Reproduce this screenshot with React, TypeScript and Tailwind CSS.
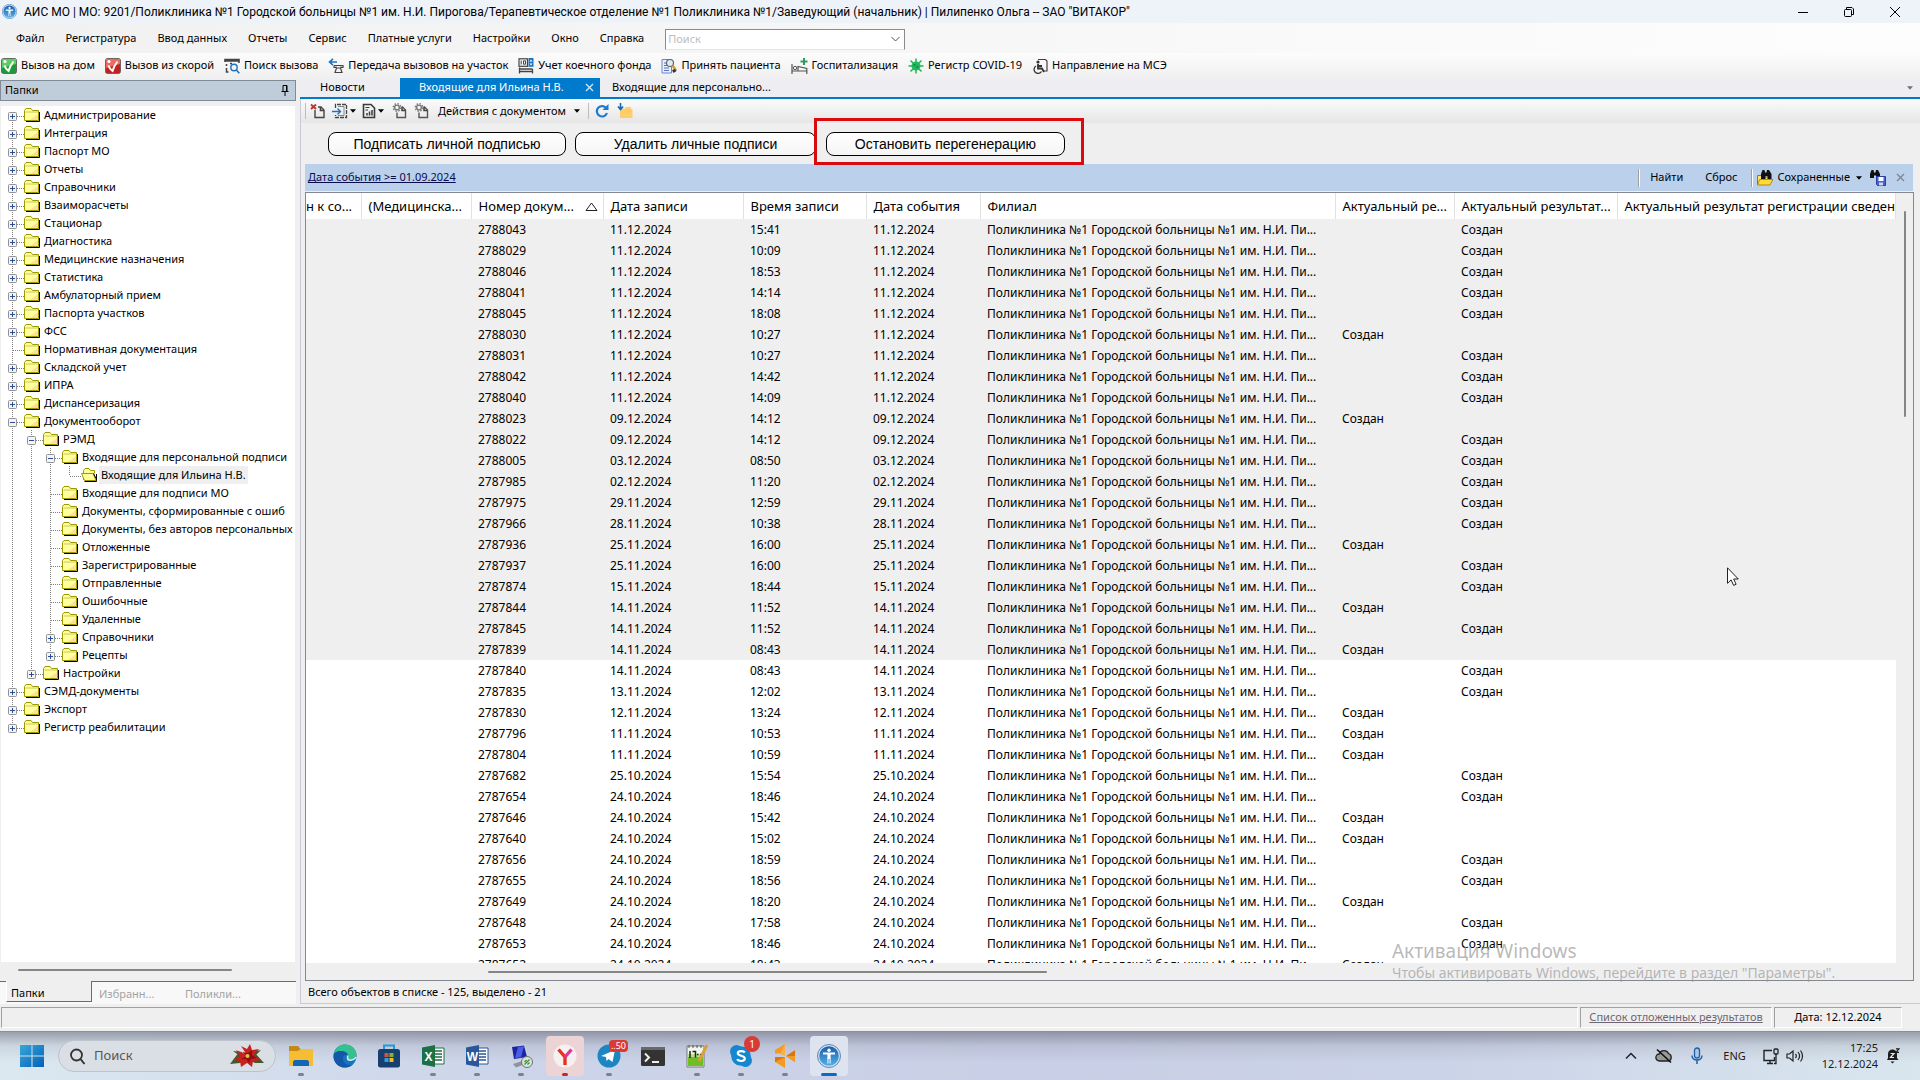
import type { ReactNode } from "react";

/* ---------- small drawings ---------- */

function AppLogo({ size = 16 }: { size?: number }) {
  return (
    <svg width={size} height={size} viewBox="0 0 24 24" aria-hidden="true">
      <defs>
        <linearGradient id="logoFill" x1="0" y1="0" x2="0" y2="1">
          <stop offset="0" stopColor="#1d5ea8" />
          <stop offset="1" stopColor="#4fb0e8" />
        </linearGradient>
      </defs>
      <circle cx="12" cy="12" r="11.5" fill="#cfdfef" stroke="#5b87b5" />
      <circle cx="12" cy="12" r="9.8" fill="url(#logoFill)" />
      <circle cx="12" cy="6.2" r="1.7" fill="#fff" />
      <path d="M6 8.6h12v2h-4.4v9h-1v-4.5h-1.2v4.5h-1v-9H6z" fill="#fff" />
    </svg>
  );
}

function Folder() {
  return (
    <svg width="16" height="16" viewBox="0 0 16 16" className="shrink-0" aria-hidden="true">
      <path d="M2 14.5h13.5V5" fill="none" stroke="#000" />
      <path d="M.5 13.500V3.500l1.500-2h5l1.500 2h6v10z" fill="#ffff9c" stroke="#9c9a00" />
      <path d="M1.500 5h12.500" stroke="#c9c760" />
      <path d="M14 7v6H6z" fill="#ffcf9c" opacity=".7" />
    </svg>
  );
}

function FolderOpen() {
  return (
    <svg width="16" height="16" viewBox="0 0 16 16" className="shrink-0" aria-hidden="true">
      <path d="M3.500 14.500h12V7" fill="none" stroke="#000" />
      <path d="M2.500 13V3.500l1.500-2h4l1.500 2h4v3" fill="#ffff9c" stroke="#9c9a00" />
      <path d="M.5 6.500h11.500l3 7H3.500z" fill="#ffff9c" stroke="#9c9a00" />
      <path d="M12.500 6.500l2.500 5" stroke="#000" />
    </svg>
  );
}

function Caret({ className = "" }: { className?: string }) {
  return (
    <svg width="6" height="4" viewBox="0 0 7 4" className={className} aria-hidden="true">
      <path d="M0 0h7L3.500 4z" fill="currentColor" />
    </svg>
  );
}

function CallIcon({ color, light }: { color: string; light: string }) {
  return (
    <svg width="16" height="16" viewBox="0 0 16 16" aria-hidden="true">
      <rect x=".5" y=".5" width="15" height="15" rx="2" fill={color} stroke="#555" strokeWidth=".8" />
      <path d="M1 1h14v5L1 10z" fill={light} opacity=".7" />
      <path d="M3.500 7.500c1 3 2.500 4.500 4 5.500 1-3.500 3-7 5-9.500" fill="none" stroke="#fff" strokeWidth="2" />
      <circle cx="4" cy="3.500" r="1.600" fill="#fff" />
    </svg>
  );
}

function SearchCallIcon() {
  return (
    <svg width="16" height="16" viewBox="0 0 16 16" fill="none" aria-hidden="true">
      <path d="M1 4V1.500h14V5M1 3h14" stroke="#444" strokeWidth="1.600" />
      <path d="M2.500 6v2M2.500 10v4h2M6 5.500h2" stroke="#444" strokeWidth="1.500" />
      <circle cx="10" cy="9.500" r="3.200" stroke="#1e73be" strokeWidth="1.400" />
      <path d="M12.300 12l3 3.300" stroke="#1e73be" strokeWidth="1.600" />
    </svg>
  );
}

function TransferIcon() {
  return (
    <svg width="16" height="16" viewBox="0 0 16 16" fill="none" aria-hidden="true">
      <path d="M9 4H2M5 .8L1.500 4 5 7.200" stroke="#1e73be" strokeWidth="1.600" />
      <path d="M6 7.500h9v2h-2v-1M8 10v-1.500M6 7.500v2h2" stroke="#444" strokeWidth="1.200" />
      <path d="M8.500 10h4l1.500 4.500H7z" stroke="#444" strokeWidth="1.200" />
    </svg>
  );
}

function BedCountIcon() {
  return (
    <svg width="16" height="16" viewBox="0 0 16 16" fill="none" aria-hidden="true">
      <rect x="1" y=".8" width="8.500" height="7.500" stroke="#444" strokeWidth="1.200" />
      <path d="M3.200 2.500v4M5.500 2.800h2v3.400h-2z" stroke="#444" />
      <rect x="10.500" y="0" width="5" height="8.800" fill="#1e73be" />
      <path d="M11.500 3.500L13 1.500l1.500 2zM11.500 5.500L13 7.500l1.500-2z" fill="#fff" />
      <path d="M1.500 9.500v6M14.500 11v4.500M1.500 13.500h13M1.500 11h13" stroke="#444" strokeWidth="1.300" />
    </svg>
  );
}

function AcceptIcon() {
  return (
    <svg width="16" height="16" viewBox="0 0 16 16" aria-hidden="true">
      <path d="M1 1.500h9.500v13.500H1z" fill="#e8efff" stroke="#6a86c8" />
      <path d="M3 5h3M3 7.500h4M3 10h5M3 12.500h5" stroke="#5673c0" />
      <circle cx="9" cy="5" r="3.500" fill="#dceaf2" stroke="#666" strokeWidth="1.200" />
      <path d="M11.500 7.500l3.500 5" stroke="#d49a3a" strokeWidth="2.400" />
      <path d="M11 12l3-1 1.500 2-3 2z" fill="#333" />
    </svg>
  );
}

function HospitalIcon() {
  return (
    <svg width="17" height="16" viewBox="0 0 17 16" fill="none" aria-hidden="true">
      <path d="M1 6v10M1 13h15M15.800 16V10.500L7 8.500v4.500" stroke="#555" strokeWidth="1.200" />
      <circle cx="4" cy="10" r="1.700" stroke="#555" />
      <path d="M13 0v7M9.500 3.500h7" stroke="#2e9960" strokeWidth="2" />
    </svg>
  );
}

function VirusIcon() {
  return (
    <svg width="16" height="16" viewBox="0 0 16 16" aria-hidden="true">
      <circle cx="8" cy="8" r="4.500" fill="#22c55e" />
      <path d="M8 .5v15M.5 8h15M2.500 2.500l11 11M13.500 2.500l-11 11" stroke="#22b35e" strokeWidth="1.500" />
      <circle cx="6.500" cy="7" r="1" fill="#0c8a3e" />
      <circle cx="9.500" cy="9.200" r="1" fill="#0c8a3e" />
    </svg>
  );
}

function ReferralIcon() {
  return (
    <svg width="16" height="16" viewBox="0 0 16 16" fill="none" aria-hidden="true">
      <path d="M6 1.500h7.500l1.500 1.500v10h-4" stroke="#444" strokeWidth="1.200" />
      <circle cx="6" cy="4" r="1.600" fill="#333" />
      <path d="M6 6v4.500h4l2 3.500M6 8h4" stroke="#333" strokeWidth="1.800" />
      <path d="M4 8a4 4 0 1 0 5.500 5.500" stroke="#333" strokeWidth="1.300" />
    </svg>
  );
}

function DeleteDocIcon() {
  return (
    <svg width="16" height="16" viewBox="0 0 16 16" fill="none" aria-hidden="true">
      <path d="M5 7v7.500h9V7l-3-3H8" stroke="#444" strokeWidth="1.400" />
      <path d="M10.500 4v3.500H14" stroke="#444" strokeWidth="1.600" />
      <path d="M1 1.500l5 4.500M6 1.500L1 6" stroke="#b8352a" strokeWidth="1.800" />
    </svg>
  );
}

function InsertDocIcon() {
  return (
    <svg width="16" height="16" viewBox="0 0 16 16" fill="none" aria-hidden="true">
      <path d="M3.500 5V1.500h11v13h-11V12" stroke="#444" strokeWidth="1.300" strokeDasharray="4 1" />
      <path d="M6 3.500h6v9H6" stroke="#888" />
      <path d="M0 8.500h8M5.500 5.500l3 3-3 3" stroke="#1e73be" strokeWidth="1.400" />
    </svg>
  );
}

function ReportIcon() {
  return (
    <svg width="14" height="16" viewBox="0 0 14 16" fill="none" aria-hidden="true">
      <path d="M1.500 1.500h7.500l3.500 3.500v9.500h-11z" stroke="#3a3a3a" strokeWidth="1.600" />
      <path d="M3.500 4.500h4M3.500 7h2.500" stroke="#3a3a3a" strokeWidth="1.200" />
      <path d="M5 12.500V10M7.500 12.500V8.500M10 12.500V7" stroke="#3a3a3a" strokeWidth="1.500" />
    </svg>
  );
}

function GearDocIcon() {
  return (
    <svg width="16" height="16" viewBox="0 0 16 16" fill="none" aria-hidden="true">
      <path d="M5 9.500v5h8.500V7l-3-3H9.500" stroke="#555" strokeWidth="1.400" />
      <path d="M10 4v3.500h3.500" stroke="#444" strokeWidth="1.600" />
      <circle cx="5" cy="4.500" r="2.400" stroke="#777" strokeWidth="1.400" />
      <circle cx="5" cy="4.500" r="3.800" stroke="#777" strokeWidth="1.300" strokeDasharray="1.500 1.480" />
    </svg>
  );
}

function RefreshIcon() {
  return (
    <svg width="14" height="14" viewBox="0 0 14 14" fill="none" aria-hidden="true">
      <path d="M11.500 4.500A5.200 5.200 0 1 0 12 9" stroke="#1c7ad0" strokeWidth="2.200" />
      <path d="M13.500 0v6H7.500z" fill="#1c7ad0" />
    </svg>
  );
}

function FolderDownIcon() {
  return (
    <svg width="16" height="16" viewBox="0 0 16 16" aria-hidden="true">
      <path d="M3 5.500h5l1-1.500h5v2h1.500v9H3z" fill="#ffce6b" />
      <path d="M3.500 0v6M1 3.500l2.500 3 2.500-3" fill="none" stroke="#1668b0" strokeWidth="1.600" />
    </svg>
  );
}

function Binoculars({ withDisk }: { withDisk?: boolean }) {
  return (
    <svg width="16" height="16" viewBox="0 0 16 16" aria-hidden="true">
      {withDisk ? (
        <>
          <path d="M0 8V4l1.500-4h2L4 2.500h1.500L6 0h2l2 4v4H6V5.500H4V8z" fill="#111" />
          <path d="M6.500 6.500h9v9H7.500l-1-1z" fill="#4a5fd0" stroke="#2c3da0" />
          <path d="M8.500 7h5v4h-5z" fill="#fff" />
          <path d="M9 12.500h4v3H9z" fill="#cdd3f5" />
        </>
      ) : (
        <>
          <path d="M.5 14V5.500h5l1 1.500h6v7z" fill="#ffe36b" stroke="#9a7d00" />
          <path d="M4 9V4l1.500-4h2L8 2.500h1.500L10 0h2l2.500 4v5h-4V6h-2v3z" fill="#111" />
          <path d="M2.500 9.500H16L13 15H.5z" fill="#ffd83b" stroke="#9a7d00" strokeWidth=".8" />
        </>
      )}
    </svg>
  );
}

/* ---------- data ---------- */

type Node = { label: string; guides: number; box?: "+" | "-"; first?: boolean; last?: boolean; active?: boolean };

const tree: Node[] = [
  { label: "Администрирование", guides: 0, box: "+", first: true },
  { label: "Интеграция", guides: 0, box: "+" },
  { label: "Паспорт МО", guides: 0, box: "+" },
  { label: "Отчеты", guides: 0, box: "+" },
  { label: "Справочники", guides: 0, box: "+" },
  { label: "Взаиморасчеты", guides: 0, box: "+" },
  { label: "Стационар", guides: 0, box: "+" },
  { label: "Диагностика", guides: 0, box: "+" },
  { label: "Медицинские назначения", guides: 0, box: "+" },
  { label: "Статистика", guides: 0, box: "+" },
  { label: "Амбулаторный прием", guides: 0, box: "+" },
  { label: "Паспорта участков", guides: 0, box: "+" },
  { label: "ФСС", guides: 0, box: "+" },
  { label: "Нормативная документация", guides: 0 },
  { label: "Складской учет", guides: 0, box: "+" },
  { label: "ИПРА", guides: 0, box: "+" },
  { label: "Диспансеризация", guides: 0, box: "+" },
  { label: "Документооборот", guides: 0, box: "-" },
  { label: "РЭМД", guides: 1, box: "-" },
  { label: "Входящие для персональной подписи", guides: 2, box: "-" },
  { label: "Входящие для Ильина Н.В.", guides: 3, last: true, active: true },
  { label: "Входящие для подписи МО", guides: 2 },
  { label: "Документы, сформированные с ошиб", guides: 2 },
  { label: "Документы, без авторов персональных", guides: 2 },
  { label: "Отложенные", guides: 2 },
  { label: "Зарегистрированные", guides: 2 },
  { label: "Отправленные", guides: 2 },
  { label: "Ошибочные", guides: 2 },
  { label: "Удаленные", guides: 2 },
  { label: "Справочники", guides: 2, box: "+" },
  { label: "Рецепты", guides: 2, box: "+", last: true },
  { label: "Настройки", guides: 1, box: "+", last: true },
  { label: "СЭМД-документы", guides: 0, box: "+" },
  { label: "Экспорт", guides: 0, box: "+" },
  { label: "Регистр реабилитации", guides: 0, box: "+", last: true },
];

/* number, date, time, index of the result column that reads "Создан" */
const rows: [string, string, string, 1 | 2][] = [
  ["2788043", "11.12.2024", "15:41", 2],
  ["2788029", "11.12.2024", "10:09", 2],
  ["2788046", "11.12.2024", "18:53", 2],
  ["2788041", "11.12.2024", "14:14", 2],
  ["2788045", "11.12.2024", "18:08", 2],
  ["2788030", "11.12.2024", "10:27", 1],
  ["2788031", "11.12.2024", "10:27", 2],
  ["2788042", "11.12.2024", "14:42", 2],
  ["2788040", "11.12.2024", "14:09", 2],
  ["2788023", "09.12.2024", "14:12", 1],
  ["2788022", "09.12.2024", "14:12", 2],
  ["2788005", "03.12.2024", "08:50", 2],
  ["2787985", "02.12.2024", "11:20", 2],
  ["2787975", "29.11.2024", "12:59", 2],
  ["2787966", "28.11.2024", "10:38", 2],
  ["2787936", "25.11.2024", "16:00", 1],
  ["2787937", "25.11.2024", "16:00", 2],
  ["2787874", "15.11.2024", "18:44", 2],
  ["2787844", "14.11.2024", "11:52", 1],
  ["2787845", "14.11.2024", "11:52", 2],
  ["2787839", "14.11.2024", "08:43", 1],
  ["2787840", "14.11.2024", "08:43", 2],
  ["2787835", "13.11.2024", "12:02", 2],
  ["2787830", "12.11.2024", "13:24", 1],
  ["2787796", "11.11.2024", "10:53", 1],
  ["2787804", "11.11.2024", "10:59", 1],
  ["2787682", "25.10.2024", "15:54", 2],
  ["2787654", "24.10.2024", "18:46", 2],
  ["2787646", "24.10.2024", "15:42", 1],
  ["2787640", "24.10.2024", "15:02", 1],
  ["2787656", "24.10.2024", "18:59", 2],
  ["2787655", "24.10.2024", "18:56", 2],
  ["2787649", "24.10.2024", "18:20", 1],
  ["2787648", "24.10.2024", "17:58", 2],
  ["2787653", "24.10.2024", "18:46", 2],
  ["2787652", "24.10.2024", "18:43", 1],
];
const SELECTED = 21;

const menu = ["Файл", "Регистратура", "Ввод данных", "Отчеты", "Сервис", "Платные услуги", "Настройки", "Окно", "Справка"];

const tools: [string, ReactNode][] = [
  ["Вызов на дом", <CallIcon color="#1e9a3a" light="#7be07b" />],
  ["Вызов из скорой", <CallIcon color="#c22020" light="#ff8a80" />],
  ["Поиск вызова", <SearchCallIcon />],
  ["Передача вызовов на участок", <TransferIcon />],
  ["Учет коечного фонда", <BedCountIcon />],
  ["Принять пациента", <AcceptIcon />],
  ["Госпитализация", <HospitalIcon />],
  ["Регистр COVID-19", <VirusIcon />],
  ["Направление на МСЭ", <ReferralIcon />],
];

/* ---------- parts ---------- */

function TreeRow({ node }: { node: Node }) {
  return (
    <li className="flex h-[18px] items-center whitespace-nowrap">
      {Array.from({ length: node.guides }, (_, i) => (
        <svg key={i} width="19" height="18" className="shrink-0" aria-hidden="true">
          <path d="M9.500 0v18" stroke="#808080" strokeDasharray="1 1" />
        </svg>
      ))}
      <svg width="21" height="18" className="shrink-0" aria-hidden="true">
        {!node.first && <path d="M9.500 0v10" stroke="#808080" strokeDasharray="1 1" />}
        {!node.last && <path d="M9.500 10v8" stroke="#808080" strokeDasharray="1 1" />}
        <path d="M10 10.500h11" stroke="#808080" strokeDasharray="1 1" />
        {node.box && (
          <>
            <rect x="5.500" y="6.500" width="8" height="8" rx="1" fill="#f4f4f4" stroke="#919191" />
            <path d={node.box === "+" ? "M7 10.500h5M9.500 8v5" : "M7 10.500h5"} stroke="#2b4b9b" />
          </>
        )}
      </svg>
      {node.active ? <FolderOpen /> : <Folder />}
      <span className={node.active ? "ml-0.5 bg-[#efefef] px-0.5" : "ml-1"}>{node.label}</span>
    </li>
  );
}

function SidePanel() {
  return (
    <aside className="flex w-[296px] shrink-0 flex-col pt-0.5 text-[11px]">
      <div className="flex h-[21px] items-center justify-between border border-[#7f8b97] bg-[#bfcddb] pr-1.5 pl-1">
        <h2>Папки</h2>
        <button aria-label="Закрепить панель">
          <svg width="8" height="11" viewBox="0 0 8 11" fill="none" aria-hidden="true">
            <path d="M2 6V.5h4V6M.5 6.500h7M4 7v4" stroke="#000" />
            <path d="M5.500 1v5" stroke="#000" />
          </svg>
        </button>
      </div>
      <ul className="mt-[5px] mr-px ml-px min-h-0 flex-1 overflow-hidden bg-white pl-[2px] leading-[18px]">
        {tree.map((n, i) => (
          <TreeRow key={i} node={n} />
        ))}
      </ul>
      <div className="flex h-[19px] items-center pb-[3px] pl-[18px]">
        <div className="h-0.5 w-[214px] rounded bg-[#858585]" />
      </div>
      <div role="tablist" className="flex h-[23px] border-t border-[#6b6b6b] bg-[#f8f8f8] leading-6">
        <button role="tab" aria-selected="true" className="-mt-px mb-0.5 ml-1.5 w-[86px] border-r border-b border-l border-[#6b6b6b] border-l-white bg-[#efefef] pl-1 text-left">
          Папки
        </button>
        <button role="tab" aria-selected="false" className="w-[86px] pl-[7px] text-left text-[#a3a3a3]">Избранн...</button>
        <button role="tab" aria-selected="false" className="w-[86px] pl-[7px] text-left text-[#a3a3a3]">Поликли...</button>
      </div>
    </aside>
  );
}

function Divider({ className = "" }: { className?: string }) {
  return <span className={"h-4 w-px bg-[#bdbdbd] " + className} />;
}

function DocumentToolbar() {
  return (
    <div className="flex h-6 items-center bg-linear-to-b from-[#fbfbfb] to-[#e6e6e6] pl-1 text-[11px]">
      <Divider />
      <button aria-label="Удалить документ" className="ml-1"><DeleteDocIcon /></button>
      <button aria-label="Вставить" className="ml-1.5 flex items-center gap-0.5"><InsertDocIcon /><Caret /></button>
      <button aria-label="Отчет" className="ml-1.5 flex items-center gap-0.5"><ReportIcon /><Caret /></button>
      <button aria-label="Обработать" className="ml-2"><GearDocIcon /></button>
      <button aria-label="Обработать все" className="ml-1.5"><GearDocIcon /></button>
      <button className="ml-2 flex items-center gap-2">Действия с документом<Caret /></button>
      <Divider className="ml-2" />
      <button aria-label="Обновить" className="ml-1.5"><RefreshIcon /></button>
      <button aria-label="Загрузить" className="ml-2"><FolderDownIcon /></button>
    </div>
  );
}

function ActionButtons() {
  const shape = "h-6 rounded-lg border border-black bg-linear-to-b from-white to-[#f5f5f5] font-['Liberation_Sans',sans-serif] text-sm";
  return (
    <div className="relative flex h-[41px] items-center pl-[27px]">
      <button className={shape + " w-[238px]"}>Подписать личной подписью</button>
      <button className={shape + " ml-[9px] w-[241px]"}>Удалить личные подписи</button>
      <button className={shape + " ml-[10px] w-[239px]"}>Остановить перегенерацию</button>
      <div className="pointer-events-none absolute -top-[5px] left-[513px] z-10 h-[47px] w-[270px] border-3 border-[#d90b0f]" />
    </div>
  );
}

function FilterBar() {
  return (
    <div className="mr-[7px] ml-1 flex h-[27px] items-center bg-[#bad0eb] pl-[3px] text-[11px]">
      <a href="#filter" className="text-[#0b0b4f] underline">Дата события &gt;= 01.09.2024</a>
      <div className="ml-auto flex items-center">
        <span className="h-[18px] w-0.5 border-l border-[#a0a0a0] bg-white" />
        <button className="ml-2.5">Найти</button>
        <button className="ml-[22px]">Сброс</button>
        <span className="ml-3.5 h-[18px] w-0.5 border-l border-[#a0a0a0] bg-white" />
        <button className="ml-1 flex items-center gap-1"><Binoculars />Сохраненные<Caret className="ml-0.5" /></button>
        <button aria-label="Сохранить фильтр" className="ml-2"><Binoculars withDisk /></button>
        <button aria-label="Закрыть фильтр" className="mr-2 ml-2.5">
          <svg width="9" height="9" viewBox="0 0 9 9" aria-hidden="true"><path d="M1 1l7 7M8 1L1 8" stroke="#7b8794" strokeWidth="1.400" /></svg>
        </button>
      </div>
    </div>
  );
}

function Th({ children, clip }: { children: ReactNode; clip?: boolean }) {
  return (
    <th className={"h-[26px] overflow-hidden border-r border-[#e2e2e2] text-left text-[13px] font-normal whitespace-nowrap " + (clip ? "pl-0" : "pl-[7px]")}>
      {children}
    </th>
  );
}

function DocumentTable() {
  return (
    <div className="mt-px mr-[6px] ml-1 flex min-h-0 flex-1 flex-col border border-[#828790] bg-[#efefef]">
      <div className="flex min-h-0 flex-1">
        <div className="min-w-0 flex-1 overflow-hidden bg-white">
          <table className="w-full table-fixed border-collapse text-[12px] leading-[18px]">
            <colgroup>
              <col className="w-[55px]" />
              <col className="w-[110px]" />
              <col className="w-[132px]" />
              <col className="w-[140px]" />
              <col className="w-[123px]" />
              <col className="w-[114px]" />
              <col className="w-[355px]" />
              <col className="w-[119px]" />
              <col className="w-[163px]" />
              <col />
            </colgroup>
            <thead>
              <tr className="bg-white">
                <Th clip>н к со...</Th>
                <Th>(Медицинска...</Th>
                <Th>
                  <span className="flex items-center justify-between pr-[5px]">
                    Номер докум...
                    <svg width="13" height="9" viewBox="0 0 13 9" fill="none" aria-hidden="true"><path d="M1 8.500h11L6.500 1z" stroke="#222" /></svg>
                  </span>
                </Th>
                <Th>Дата записи</Th>
                <Th>Время записи</Th>
                <Th>Дата события</Th>
                <Th>Филиал</Th>
                <Th>Актуальный ре...</Th>
                <Th>Актуальный результат...</Th>
                <Th>Актуальный результат регистрации сведен</Th>
              </tr>
            </thead>
            <tbody>
              {rows.map(([num, date, time, col], i) => (
                <tr key={num} className={i < SELECTED ? "h-[21px] bg-[#efefef]" : "h-[21px]"}>
                  <td />
                  <td />
                  <td className="pl-[7px]">{num}</td>
                  <td className="pl-[7px]">{date}</td>
                  <td className="pl-[7px]">{time}</td>
                  <td className="pl-[7px]">{date}</td>
                  <td className="overflow-hidden pl-[7px] whitespace-nowrap">Поликлиника №1 Городской больницы №1 им. Н.И. Пи...</td>
                  <td className="pl-[7px]">{col === 1 ? "Создан" : ""}</td>
                  <td className="pl-[7px]">{col === 2 ? "Создан" : ""}</td>
                  <td />
                </tr>
              ))}
            </tbody>
          </table>
        </div>
        <div className="flex w-[17px] justify-center pt-[18px]">
          <div className="h-[206px] w-0.5 rounded bg-[#858585]" />
        </div>
      </div>
      <div className="flex h-[17px] items-center pl-[182px]">
        <div className="h-0.5 w-[559px] rounded bg-[#858585]" />
      </div>
    </div>
  );
}

/* ---------- taskbar ---------- */

function Task({ label, children, dot }: { label: string; children: ReactNode; dot?: "gray" | "red" | "blue" }) {
  const frame = dot === "red" ? " rounded bg-[#ecd3d6]" : dot === "blue" ? " rounded bg-[#dde3ef]" : "";
  const mark = dot === "blue" ? "w-4 bg-[#0b6cc4]" : dot === "red" ? "w-1.5 bg-[#c22a2a]" : dot ? "w-1.5 bg-[#7c828c]" : "w-0";
  return (
    <button aria-label={label} className="flex w-11 items-center justify-center">
      <span className={"relative flex h-10 w-[38px] items-center justify-center" + frame}>
        {children}
        <span className={"absolute bottom-0 h-[3px] rounded-full " + mark} />
      </span>
    </button>
  );
}

function Office({ letter, color }: { letter: string; color: string }) {
  return (
    <svg width="24" height="24" viewBox="0 0 24 24" aria-hidden="true">
      <path d="M12 4h11v16H12z" fill="#fff" stroke={color} />
      <path d="M14 7h7M14 10h7M14 13h7M14 16h7" stroke={color} strokeWidth="1.500" />
      <path d="M1 3.500L14 1v22L1 20.500z" fill={color} />
      <text x="7.500" y="16.500" textAnchor="middle" fontSize="12" fontWeight="bold" fill="#fff" fontFamily="Liberation Sans">{letter}</text>
    </svg>
  );
}

function Taskbar() {
  return (
    <footer className="flex h-12 shrink-0 bg-[linear-gradient(to_bottom,rgba(90,90,105,0.5),rgba(90,90,105,0.12)_14px,transparent_30px),linear-gradient(to_right,#dbe8f0,#cdd5ea_25%,#c8cfe6_55%,#cbd3e8_75%,#d9e6ee)] pl-[10px] text-[#1c1c1c]">
      <Task label="Пуск">
        <svg width="24" height="24" viewBox="0 0 24 24" aria-hidden="true">
          <defs><linearGradient id="win" x1="0" y1="0" x2="1" y2="1"><stop offset="0" stopColor="#37a7d8" /><stop offset="1" stopColor="#0560b8" /></linearGradient></defs>
          <path d="M0 1h11.500v10.500H0zM12.500 1H24v10.500H12.500zM0 12.500h11.500V23H0zM12.500 12.500H24V23H12.500z" fill="url(#win)" />
        </svg>
      </Task>
      <label className="mt-2 mr-[3px] ml-1 flex h-8 w-[218px] items-center rounded-full border border-[#bcc3cc] bg-[#dadfe5] pr-2.5 pl-2.5">
        <svg width="17" height="17" viewBox="0 0 17 17" fill="none" aria-hidden="true">
          <circle cx="7.500" cy="7" r="5.500" stroke="#333" strokeWidth="1.800" />
          <path d="M11.500 11l4 5" stroke="#333" strokeWidth="2" />
        </svg>
        <input aria-label="Поиск в Windows" placeholder="Поиск" className="ml-2 w-24 bg-transparent text-[13px] outline-none placeholder:text-[#555]" />
        <svg width="36" height="24" viewBox="0 0 36 24" className="ml-auto" aria-hidden="true">
          <path d="M1 20L10 8l6 8-5 3zM35 19L26 9l-6 7 6 3zM4 7l9 1-2 4zM32 6l-9 2 3 4z" fill="#3f5b2a" />
          <path d="M18 11L12 2l6 3 3-5 2 6 7-1-5 6 7 5-8 1-1 6-5-4-6 4-1-6-7-1 7-4-4-6z" fill="#c9201f" />
          <path d="M18 12l-5-4 6 1 4-3 0 5 5 3-6 1-2 4-3-4-5 0z" fill="#8d1010" />
          <circle cx="18.500" cy="12" r="2" fill="#e4c33c" />
        </svg>
      </label>
      <Task label="Проводник" dot="gray">
        <svg width="24" height="24" viewBox="0 0 24 24" aria-hidden="true">
          <path d="M0 2h9l2.500 3H24v17H0z" fill="#c58a16" />
          <path d="M0 7h9l2.500-2H24v17H0z" fill="#f4bd34" />
          <path d="M4 22v-4c0-1 1-2 2-2h12c1 0 2 1 2 2v4z" fill="#1566b4" />
        </svg>
      </Task>
      <Task label="Edge">
        <svg width="24" height="24" viewBox="0 0 24 24" aria-hidden="true">
          <circle cx="12" cy="12" r="11.500" fill="#1474c4" />
          <path d="M1 9C3 3 7 .5 12 .5c7 0 11.500 5 11.500 10 0 4-4 6-7 5.500-3-.6-1-2.500-1.500-5C14.500 8 10 6.500 6 7.200 3.500 7.700 2 8.500 1 9z" fill="#35c18d" />
          <path d="M.5 12C1 8 5 6.500 8.500 7c4 .6 6 2.500 6.400 5-2-1.800-4.500-1-5 1.500-.6 4 3.500 8.500 9 7.500-2 1.800-5 2.500-7 2.500C5 23.500.2 18 .5 12z" fill="#1257a8" />
          <path d="M14.500 11.500c.5 2-1 4 1.500 4.500 2.500.5 6-.5 7-3" fill="none" stroke="#dfe9f4" strokeWidth="1.500" />
        </svg>
      </Task>
      <Task label="Microsoft Store">
        <svg width="24" height="24" viewBox="0 0 24 24" aria-hidden="true">
          <path d="M7 6V1.500h10V6" fill="none" stroke="#1f9bd8" strokeWidth="2" />
          <rect x="1" y="5" width="22" height="18.500" rx="2.500" fill="#173f70" />
          <path d="M7.500 9h4v4h-4z" fill="#e0502e" /><path d="M12.500 9h4v4h-4z" fill="#7fb82c" />
          <path d="M7.500 14h4v4h-4z" fill="#29a3e0" /><path d="M12.500 14h4v4h-4z" fill="#f5b921" />
        </svg>
      </Task>
      <Task label="Excel" dot="gray"><Office letter="X" color="#1d7044" /></Task>
      <Task label="Word" dot="gray"><Office letter="W" color="#2a579a" /></Task>
      <Task label="Удаленный рабочий стол" dot="gray">
        <svg width="24" height="24" viewBox="0 0 24 24" aria-hidden="true">
          <path d="M1 2l15-2 4 14-16 3z" fill="#c9ccd4" /><path d="M3 3l12-1.500L18 13 5 15z" fill="#1724a8" />
          <path d="M9 3l6-.8-3 11-6 .8z" fill="#4b5de0" /><path d="M4 20l9-3 3 3-9 3.500z" fill="#8f949c" />
          <circle cx="18" cy="18" r="5.500" fill="#dfe3df" stroke="#6d736d" /><path d="M15.500 18l2-2M15.500 20.500l5-5M18.500 20.500l2-2" stroke="#2f9a3c" strokeWidth="1.300" />
        </svg>
      </Task>
      <Task label="Яндекс" dot="red">
        <svg width="24" height="24" viewBox="0 0 24 24" aria-hidden="true">
          <circle cx="12" cy="12" r="11.500" fill="#f6f0f0" />
          <path d="M5.500 5.500L12 13v8" fill="none" stroke="#e8321f" strokeWidth="3.400" /><path d="M18.500 5.500L12 13" stroke="#d839a0" strokeWidth="3.400" />
        </svg>
      </Task>
      <Task label="Telegram" dot="gray">
        <svg width="24" height="24" viewBox="0 0 24 24" aria-hidden="true">
          <circle cx="12" cy="12" r="11.500" fill="#1c86c0" />
          <path d="M4 12l14-6-2.500 12-4-3-2 2-.5-4z" fill="#fff" />
        </svg>
        <span className="absolute top-1 right-0 rounded bg-[#d93a35] px-0.5 text-[9px] leading-3 text-white">..50</span>
      </Task>
      <Task label="Терминал">
        <svg width="24" height="24" viewBox="0 0 24 24" aria-hidden="true">
          <rect y="3" width="24" height="19" rx="1.500" fill="#333" /><path d="M0 3h24v3H0z" fill="#686868" />
          <path d="M4 9.500l4 4-4 4M11 18h7" fill="none" stroke="#eee" strokeWidth="2" />
        </svg>
      </Task>
      <Task label="Notepad++" dot="gray">
        <svg width="24" height="24" viewBox="0 0 24 24" aria-hidden="true">
          <path d="M2 2h17v21H2z" fill="#f1f5ea" stroke="#777" /><path d="M3 13h15v9H3z" fill="#6fbf24" /><path d="M3 10h15v3H3z" fill="#b9e08a" />
          <path d="M5 7v7M7.500 7.500h3v6M12 10.500h1.500M15 10.500h1.500" stroke="#222" strokeWidth="1.500" fill="none" /><path d="M22 1L14 17" stroke="#d9a13b" strokeWidth="3" />
          <path d="M4 1v3M8 1v3M12 1v3M16 1v3" stroke="#555" />
        </svg>
      </Task>
      <Task label="Skype" dot="gray">
        <svg width="24" height="24" viewBox="0 0 24 24" aria-hidden="true">
          <circle cx="7.500" cy="7.500" r="6.500" fill="#1487d0" /><circle cx="16.500" cy="16.500" r="6.500" fill="#1487d0" /><circle cx="12" cy="12" r="9.800" fill="#1487d0" />
          <path d="M15.800 8.500C15 6.800 9 6.300 8.800 9.200c-.2 3.200 7 2 7 5.400 0 3.200-6.600 3-7.600.6" fill="none" stroke="#fff" strokeWidth="2.200" />
        </svg>
        <span className="absolute top-0 right-0 h-4 w-4 rounded-full bg-[#d93a35] text-center text-[10px] leading-4 text-white">1</span>
      </Task>
      <Task label="Клиент обновлений" dot="gray">
        <svg width="24" height="24" viewBox="0 0 24 24" aria-hidden="true">
          <path d="M12 0v24L2 18v-5h10V9.500H2V6z" fill="#f39a1f" />
          <path d="M2 13h10l-10 5z" fill="#d9760f" /><path d="M12 0v12L7 10z" fill="#f8b04a" />
          <path d="M13 12l9-6v12z" fill="#d9760f" /><path d="M13 12l9 6V12z" fill="#f39a1f" />
        </svg>
      </Task>
      <Task label="АИС МО" dot="blue"><AppLogo size={24} /></Task>

      <div className="ml-auto flex items-center pr-5 text-[11px]">
        <svg width="12" height="8" viewBox="0 0 12 8" fill="none" aria-hidden="true"><path d="M1 6.500l5-5 5 5" stroke="#222" strokeWidth="1.500" /></svg>
        <svg width="18" height="16" viewBox="0 0 18 16" className="ml-[18px]" aria-hidden="true">
          <path d="M4.500 13a3.500 3.500 0 0 1-.3-7A5 5 0 0 1 13.500 5.500a4 4 0 0 1 .2 7.500z" fill="#999" stroke="#222" strokeWidth="1.300" /><path d="M2 1.500l14 13" stroke="#111" strokeWidth="1.600" />
        </svg>
        <svg width="12" height="18" viewBox="0 0 12 18" fill="none" className="ml-[18px]" aria-hidden="true">
          <rect x="3.500" y="1" width="5" height="10" rx="2.500" stroke="#1c5fa8" fill="#a9c7e6" strokeWidth="1.300" /><path d="M1 8.500c0 6 10 6 10 0M6 13v4" stroke="#1c5fa8" strokeWidth="1.500" />
        </svg>
        <span className="ml-5">ENG</span>
        <svg width="18" height="17" viewBox="0 0 18 17" fill="none" className="ml-4" aria-hidden="true">
          <path d="M10 2.500H2v10h10.500V9M5 15.500h6M8 13v2.500" stroke="#222" strokeWidth="1.400" /><rect x="12" y="1" width="4" height="5" rx="1" stroke="#222" strokeWidth="1.300" /><path d="M14 6v9.500h-2" stroke="#222" strokeWidth="1.300" />
        </svg>
        <svg width="18" height="14" viewBox="0 0 18 14" fill="none" className="ml-1.5" aria-hidden="true">
          <path d="M1 5h2.500L7 2v10L3.500 9H1z" stroke="#222" strokeWidth="1.200" /><path d="M9.500 5c1 1.200 1 2.800 0 4M12 3c2 2.500 2 5.500 0 8M14.500 1.500c2.600 3.500 2.600 7.500 0 11" stroke="#222" strokeWidth="1.200" />
        </svg>
        <div className="ml-[18px] text-right leading-4">
          <div>17:25</div>
          <div>12.12.2024</div>
        </div>
        <svg width="14" height="16" viewBox="0 0 14 16" className="ml-2" aria-hidden="true">
          <path d="M1 12l1-2V6c0-3 2-4.500 4.500-4.500S11 3 11 6v4l1.500 2zM4.500 13.500h4L6.500 15.500z" fill="#1b1b1b" />
          <path d="M4.500 5.500h3.500l-3.500 4h3.500" fill="none" stroke="#dfe6ee" strokeWidth="1.200" /><path d="M10 .8h3l-3 3.500h3" fill="none" stroke="#1b1b1b" strokeWidth="1.200" />
        </svg>
      </div>
    </footer>
  );
}

/* ---------- page ---------- */

export default function App() {
  return (
    <div className="relative flex h-screen flex-col overflow-hidden bg-[#efefef] font-['Noto_Sans','Open_Sans',sans-serif] text-[11px] text-black">
      <header className="flex h-[23px] shrink-0 items-center bg-[#eef3fa] pl-0.5">
        <AppLogo size={15} />
        <h1 className="ml-[7px] font-['Roboto','Noto_Sans',sans-serif] text-[12px] whitespace-nowrap">
          АИС МО | МО: 9201/Поликлиника №1 Городской больницы №1 им. Н.И. Пирогова/Терапевтическое отделение №1 Поликлиника №1/Заведующий (начальник) | Пилипенко Ольга -- ЗАО "ВИТАКОР"
        </h1>
        <div className="ml-auto flex items-center gap-9 pr-5">
          <button aria-label="Свернуть"><svg width="10" height="10" viewBox="0 0 10 10"><path d="M0 5.500h10" stroke="#000" /></svg></button>
          <button aria-label="Восстановить"><svg width="10" height="10" viewBox="0 0 10 10" fill="none"><rect x=".5" y="2.500" width="7" height="7" rx="1" stroke="#000" /><path d="M2.500 2V.5H8L9.500 2v5.500H8" stroke="#000" /></svg></button>
          <button aria-label="Закрыть"><svg width="10" height="10" viewBox="0 0 10 10"><path d="M0 0l10 10M10 0L0 10" stroke="#000" /></svg></button>
        </div>
      </header>

      <nav className="flex h-[30px] shrink-0 items-center bg-linear-to-r from-[#f1f1f1] to-[#fdfdfd] pl-4">
        <div className="flex gap-[21px]">
          {menu.map((m) => (
            <button key={m}>{m}</button>
          ))}
        </div>
        <div className="mt-0.5 ml-[21px] flex h-[21px] w-60 items-center border border-[#8a8a8a] border-b-[#e5e5e5] bg-white pr-1 pl-0.5">
          <input aria-label="Поиск" placeholder="Поиск" className="min-w-0 flex-1 outline-none placeholder:text-[#bdbdbd]" />
          <button aria-label="Открыть список">
            <svg width="9" height="6" viewBox="0 0 9 6" fill="none"><path d="M.5 1l4 4 4-4" stroke="#555" /></svg>
          </button>
        </div>
      </nav>

      <div className="flex h-[25px] shrink-0 items-center gap-2.5 bg-linear-to-b from-[#fcfcfc] to-[#f0f0f0] pl-px">
        {tools.map(([label, icon]) => (
          <button key={label} className="flex items-center gap-1 whitespace-nowrap">{icon}{label}</button>
        ))}
      </div>

      <div className="flex min-h-0 flex-1">
        <SidePanel />
        <main className="ml-1 flex min-w-0 flex-1 flex-col">
          <div className="flex h-[21px] items-stretch border-b-2 border-[#007acc] bg-[#eeeef2]">
            <button className="w-[100px] pl-5 text-left">Новости</button>
            <div className="flex w-[200px] items-center bg-[#007acc] pr-1.5 pl-[19px] text-white">
              <button>Входящие для Ильина Н.В.</button>
              <button aria-label="Закрыть вкладку" className="ml-auto">
                <svg width="9" height="9" viewBox="0 0 9 9"><path d="M1 1l7 7M8 1L1 8" stroke="#cfe6f7" strokeWidth="1.400" /></svg>
              </button>
            </div>
            <button className="pl-3">Входящие для персонально...</button>
            <button aria-label="Список вкладок" className="mr-[7px] ml-auto text-[#717171]"><Caret /></button>
          </div>
          <div className="flex min-h-0 flex-1 flex-col border-b border-l border-[#c9c9dc]">
            <DocumentToolbar />
            <ActionButtons />
            <FilterBar />
            <DocumentTable />
            <p className="h-[22px] pl-[3px] leading-[22px]"><span className="pl-1">Всего объектов в списке - 125, выделено - 21</span></p>
          </div>
        </main>
      </div>

      <div className="flex h-7 shrink-0 gap-0.5 border-b border-[#8d8f94] pt-[3px] pr-[18px] pb-[3px] pl-px">
        <div className="flex-1 border border-[#a0a0a0] border-r-white border-b-white" />
        <div className="flex w-[192px] items-center justify-center border border-[#a0a0a0] border-r-white border-b-white">
          <a href="#delayed" className="text-[#6f6672] underline">Список отложенных результатов</a>
        </div>
        <div className="flex w-[128px] items-center justify-center border border-[#a0a0a0] border-r-white border-b-white">Дата: 12.12.2024</div>
      </div>

      <Taskbar />

      <div className="pointer-events-none absolute right-[74px] bottom-[97px] w-[454px] whitespace-nowrap text-[#9a9a9a]/70">
        <div className="text-[19px] leading-6">Активация Windows</div>
        <div className="text-[14px] leading-5">Чтобы активировать Windows, перейдите в раздел "Параметры".</div>
      </div>

      <svg width="12" height="19" viewBox="0 0 12 19" className="pointer-events-none absolute top-[567px] left-[1727px]" aria-hidden="true">
        <path d="M.5.800v15.500l3.600-3.400 2.500 5.500 2.500-1.100-2.400-5.300h4.600z" fill="#fff" stroke="#222" />
      </svg>
    </div>
  );
}
